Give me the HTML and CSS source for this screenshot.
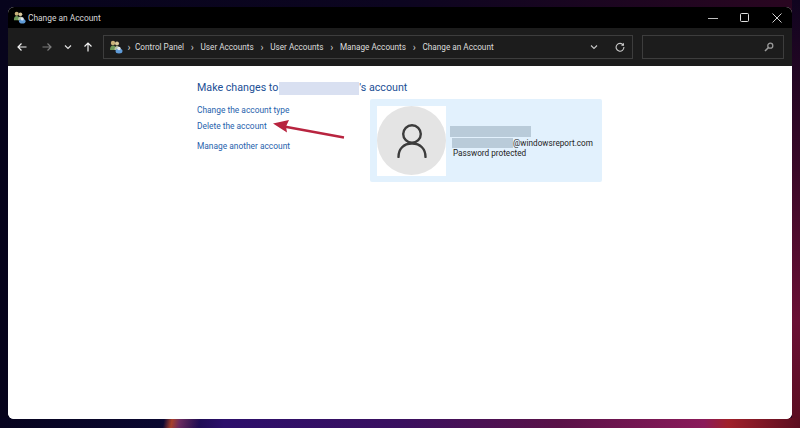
FILE: index.html
```html
<!DOCTYPE html>
<html lang="en">
<head>
<meta charset="utf-8">
<title>Change an Account</title>
<link rel="stylesheet" href="styles.css">
</head>
<body>
<div class="window">
  <header class="titlebar">
    <svg class="app-icon" viewBox="0 0 14 14" width="13" height="13">
      <circle cx="4" cy="3" r="2.2" fill="#c9b27a"/><path d="M1 10c0-3 1-4.500 3-4.500s3 1.500 3 4.500z" fill="#6f9a5a"/>
      <circle cx="8" cy="3.500" r="2" fill="#d8c79a"/><path d="M5.500 10c0-3 1-4 2.500-4s3 1 3 4z" fill="#b7c3a5"/>
      <ellipse cx="10" cy="11" rx="3.500" ry="2.500" fill="#5f9bd8"/><circle cx="10" cy="8.500" r="1.700" fill="#dfe8f2"/>
    </svg>
    <span class="title">Change an Account</span>
    <div class="win-controls">
      <svg viewBox="0 0 10 10" width="10" height="10"><path d="M0 5.500h10" stroke="#bdbdbd" stroke-width="1"/></svg>
      <svg viewBox="0 0 10 10" width="10" height="10"><rect x=".5" y=".5" width="8" height="8" rx="1" fill="none" stroke="#e0e0e0"/></svg>
      <svg viewBox="0 0 10 10" width="10" height="10"><path d="M.5.500l9 9M9.500.500l-9 9" stroke="#d0d0d0" fill="none"/></svg>
    </div>
  </header>
  <nav class="toolbar">
    <div class="nav-buttons">
      <svg class="nav-back" viewBox="0 0 10 10" width="10" height="10"><path d="M9.500 5H1M4.500 1.500L1 5l3.500 3.500" fill="none" stroke="#f0f0f0" stroke-width="1.200"/></svg>
      <svg class="nav-fwd" viewBox="0 0 10 10" width="10" height="10"><path d="M.5 5H9M5.500 1.500L9 5 5.500 8.500" fill="none" stroke="#7c7c7c" stroke-width="1.200"/></svg>
      <svg class="nav-drop" viewBox="0 0 8 8" width="8" height="8"><path d="M1 2.500l3 3 3-3" fill="none" stroke="#e0e0e0" stroke-width="1.200"/></svg>
      <svg class="nav-up" viewBox="0 0 10 10" width="10" height="10"><path d="M5 9.500V1M1.500 4.500L5 1l3.500 3.500" fill="none" stroke="#f0f0f0" stroke-width="1.200"/></svg>
    </div>
    <div class="address">
      <svg class="app-icon" viewBox="0 0 14 14" width="14" height="14">
        <circle cx="4" cy="3" r="2.200" fill="#c9b27a"/><path d="M1 10c0-3 1-4.500 3-4.500s3 1.500 3 4.500z" fill="#6f9a5a"/>
        <circle cx="8" cy="3.500" r="2" fill="#d8c79a"/><path d="M5.500 10c0-3 1-4 2.500-4s3 1 3 4z" fill="#b7c3a5"/>
        <ellipse cx="10" cy="11" rx="3.500" ry="2.500" fill="#5f9bd8"/><circle cx="10" cy="8.500" r="1.700" fill="#dfe8f2"/>
      </svg>
      <span class="crumb-sep crumb-first">›</span><span>Control Panel</span>
      <span class="crumb-sep">›</span><span>User Accounts</span>
      <span class="crumb-sep">›</span><span>User Accounts</span>
      <span class="crumb-sep">›</span><span>Manage Accounts</span>
      <span class="crumb-sep">›</span><span>Change an Account</span>
      <svg class="addr-drop" viewBox="0 0 8 8" width="8" height="8"><path d="M1 2.500l3 3 3-3" fill="none" stroke="#c8c8c8" stroke-width="1.100"/></svg>
      <svg class="addr-refresh" viewBox="0 0 10 10" width="10" height="10"><path d="M8.300 3.200A3.900 3.900 0 1 0 8.900 5" fill="none" stroke="#c8c8c8" stroke-width="1.100"/><path d="M9 .8v3H6z" fill="#c8c8c8"/></svg>
    </div>
    <div class="search">
      <svg viewBox="0 0 10 10" width="10" height="10"><circle cx="6.300" cy="3.700" r="2.500" fill="none" stroke="#9a9a9a" stroke-width="1.300"/><path d="M4.500 5.500L1 9" stroke="#9a9a9a" stroke-width="1.600"/></svg>
    </div>
  </nav>
  <main class="content">
    <h1 class="heading">Make changes to<span class="blur-name"></span>'s account</h1>
    <div class="columns">
      <ul class="links">
        <li><a href="#">Change the account type</a></li>
        <li><a href="#">Delete the account</a></li>
        <li class="links-gap"><a href="#">Manage another account</a></li>
      </ul>
      <section class="card">
        <div class="avatar-box">
          <div class="avatar">
            <svg viewBox="0 0 30 34" width="30" height="34"><circle cx="15" cy="10" r="8.800" fill="none" stroke="#3c3c3c" stroke-width="2.400"/><path d="M1.500 33c0-8 5-13.500 13.500-13.500s13.500 5.500 13.500 13.500" fill="none" stroke="#3c3c3c" stroke-width="2.400" stroke-linecap="round"/></svg>
          </div>
        </div>
        <div class="card-info">
          <div class="blur-title"></div>
          <div class="email"><span class="blur-email"></span>@windowsreport.com</div>
          <div class="status">Password protected</div>
        </div>
      </section>
    </div>
    <svg class="arrow" viewBox="0 0 74 20" width="74" height="20"><path d="M72 17.500L12 6.500" stroke="#b8243f" stroke-width="2.400" fill="none"/><path d="M1 3.500L17 0l-3 6.500 1 6z" fill="#b8243f"/></svg>
  </main>
</div>
</body>
</html>
```
FILE: styles.css
```css
* { box-sizing: border-box; }
html, body { height: 100%; }
body {
  margin: 0;
  height: 428px;
  padding: 7px 8px 9px;
  overflow: hidden;
  font-family: Roboto, "Open Sans", "Liberation Sans", sans-serif;
  background:
    linear-gradient(100deg, transparent 20.500%, #a8402a 21.500%, #6a2a60 22.500%, transparent 25%) 0 100% / 100% 10px no-repeat,
    linear-gradient(90deg, #07041f 0%, #0a0830 20%, #2c0f6b 28%, #3a1060 50%, #5a1248 70%, #8a1a5a 88%, #a0202a 91%, #5a0d20 100%) 0 100% / 100% 10px no-repeat,
    linear-gradient(180deg, #10041f 0%, #3a0828 40%, #6a0f35 75%, #5a0d20 100%) 100% 0 / 8px 100% no-repeat,
    linear-gradient(90deg, #07041c 0%, #0c0520 50%, #2a0620 100%);
}
.window {
  height: 412px;
  display: flex;
  flex-direction: column;
  border-radius: 6px;
  overflow: hidden;
  background: #fff;
}
.titlebar {
  height: 21px;
  flex: none;
  display: flex;
  align-items: center;
  background: #000;
  padding: 0 10px 0 5px;
  color: #d8d8d8;
  font-size: 8.400px;
}
.title { margin-left: 2px; }
.win-controls { margin-left: auto; display: flex; gap: 22px; align-items: center; }
.toolbar {
  height: 38px;
  flex: none;
  display: flex;
  align-items: center;
  background: #1c1c1c;
  padding: 0 7px 0 9px;
}
.nav-buttons { width: 86px; display: flex; align-items: center; flex: none; }
.nav-fwd { margin-left: 15px; }
.nav-drop { margin-left: 12px; }
.nav-up { margin-left: 11px; }
.address {
  width: 530px;
  height: 24px;
  flex: none;
  display: flex;
  align-items: center;
  border: 1px solid #3d3d3d;
  padding: 0 7px 0 5px;
  color: #dcdcdc;
  font-size: 8.200px;
  white-space: nowrap;
}
.crumb-sep { width: 16.500px; text-align: center; font-size: 10px; color: #d0d0d0; }
.crumb-first { width: 12px; }
.addr-drop { margin-left: auto; }
.addr-refresh { margin-left: 17px; }
.search {
  width: 142px;
  height: 24px;
  flex: none;
  margin-left: 9px;
  display: flex;
  align-items: center;
  justify-content: flex-end;
  padding-right: 9px;
  border: 1px solid #3d3d3d;
}
.content {
  position: relative;
  flex: 1;
  padding: 14px 0 0 189px;
  background: #fff;
}
.heading {
  margin: 0;
  display: flex;
  align-items: center;
  font-size: 10.700px;
  line-height: 16px;
  font-weight: 400;
  color: #1c4f96;
  white-space: nowrap;
}
.blur-name { width: 80px; height: 13px; margin-left: 1px; background: #d9e0f1; }
.columns { display: flex; }
.links {
  list-style: none;
  margin: 6px 0 0;
  padding: 0;
  width: 173px;
  flex: none;
  font-size: 8.400px;
}
.links li { height: 16px; line-height: 16px; }
.links .links-gap { margin-top: 4px; }
.links a { color: #1f62ad; text-decoration: none; }
.card {
  width: 232px;
  height: 83px;
  margin-top: 3px;
  display: flex;
  align-items: center;
  padding: 0 7px;
  background: #e2f1fd;
  border-radius: 2px;
  color: #222;
  font-size: 8.200px;
}
.avatar-box {
  width: 69px;
  height: 70px;
  flex: none;
  display: flex;
  align-items: center;
  background: #fff;
}
.avatar {
  width: 69px;
  height: 69px;
  display: flex;
  align-items: center;
  justify-content: center;
  border-radius: 50%;
  background: #e4e4e4;
}
.card-info { margin-left: 4px; padding-top: 3px; }
.blur-title { width: 81px; height: 11px; background: #b9cbd9; }
.email { display: flex; align-items: center; height: 10px; margin: 1px 0 0 2px; line-height: 10px; white-space: nowrap; }
.blur-email { width: 61px; height: 10px; background: #b9cbd9; }
.status { margin-left: 3px; line-height: 10px; }
.arrow {
  position: absolute;
  left: 264px;
  top: 54px;
}
```
